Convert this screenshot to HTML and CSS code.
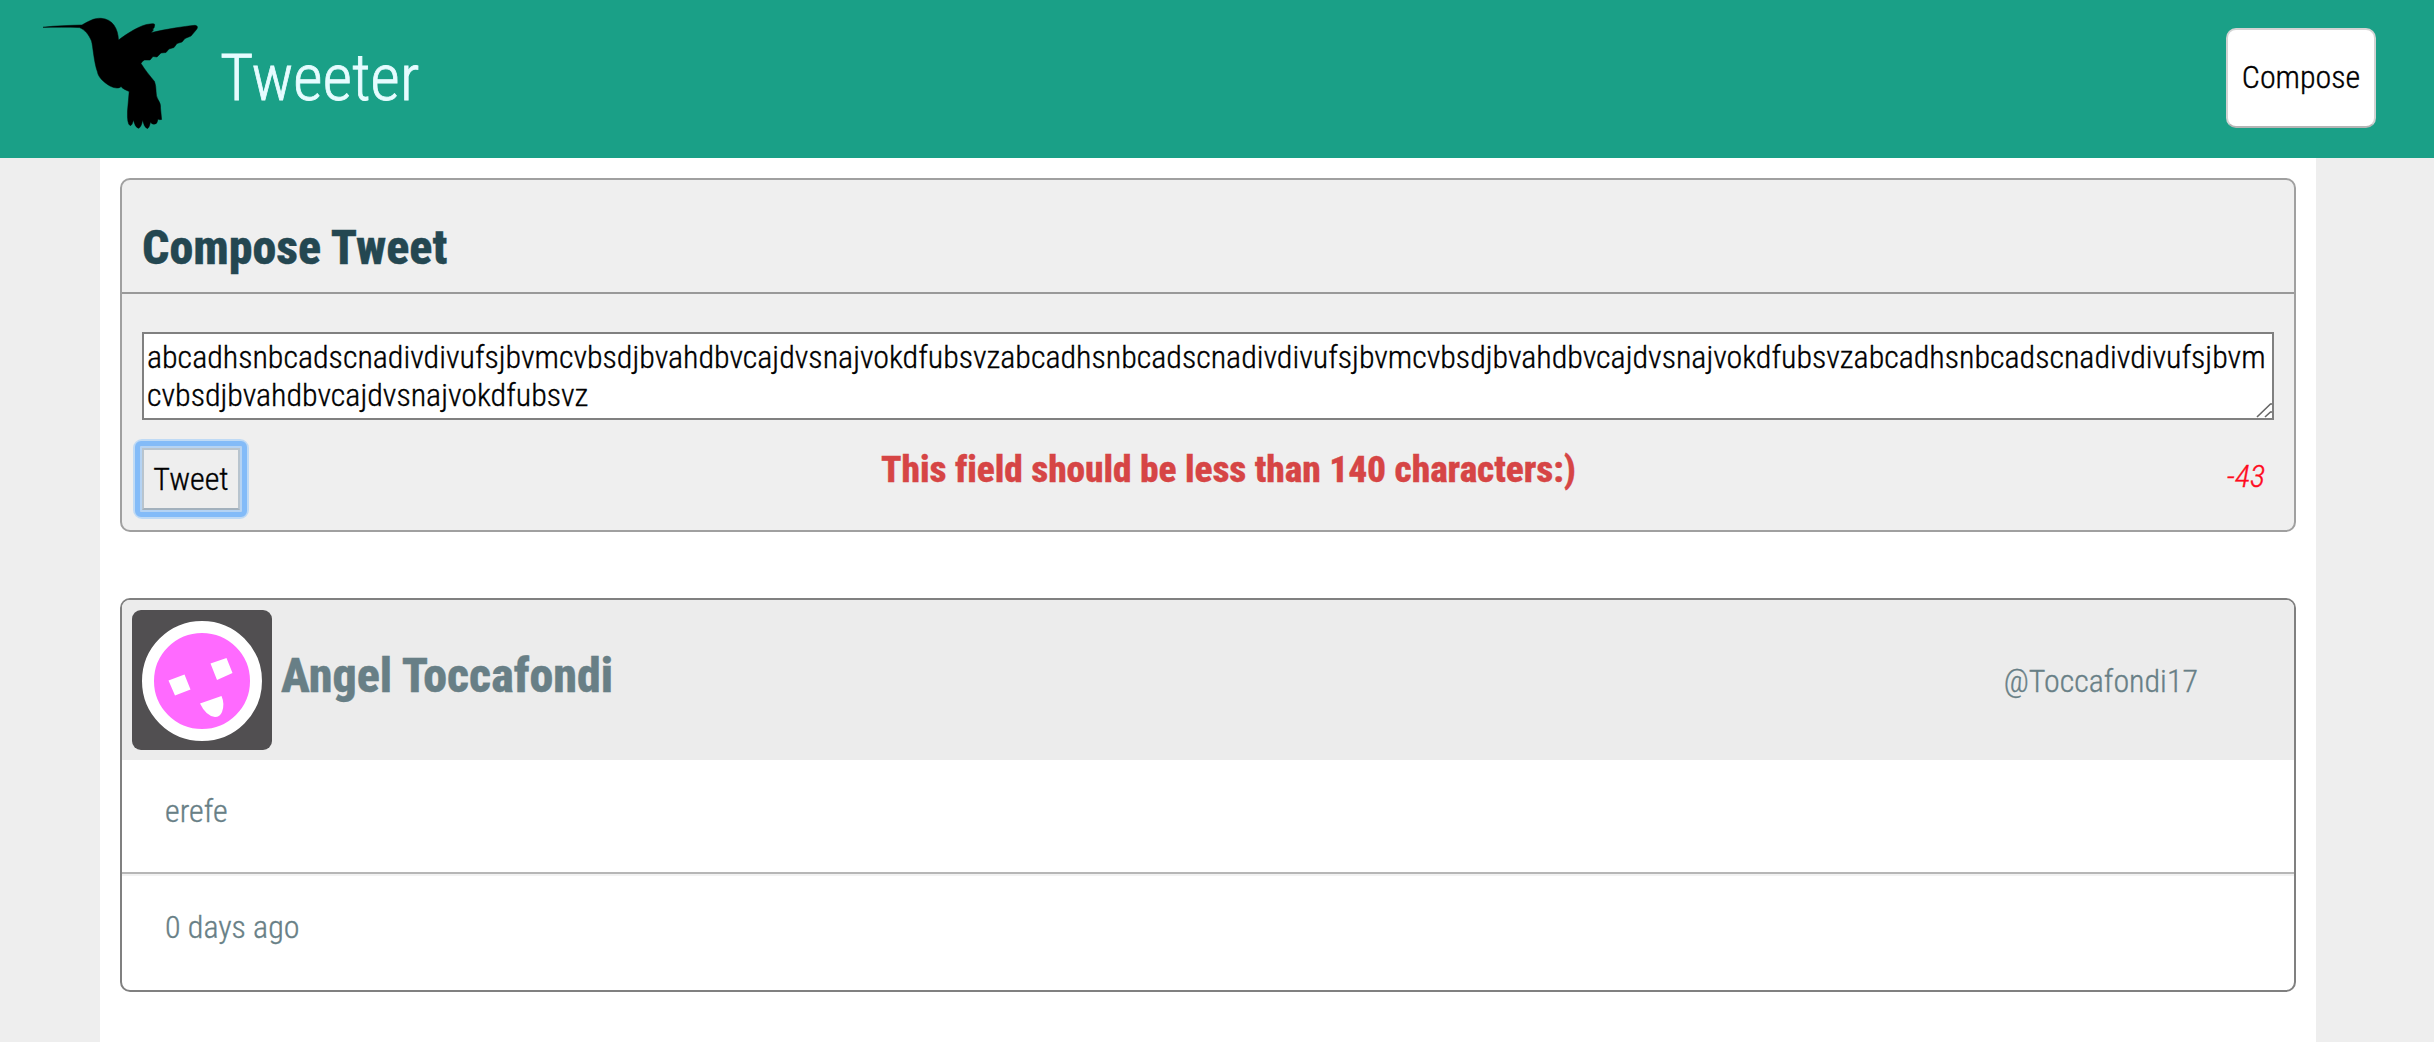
FILE: index.html
```html
<!DOCTYPE html>
<html lang="en">
<head>
<meta charset="utf-8">
<title>Tweeter</title>
<link rel="stylesheet" href="styles.css">
</head>
<body>
<header class="nav">
  <svg class="logo" viewBox="0 0 180 125" width="180" height="125" aria-hidden="true">
    <path stroke="#000" stroke-width="0.5" d="M13 17.3C26 15.6 40 15.4 52 15C59 11 64 8 71 8.3C83 9 88 19 88.500 30C98 23 111 14.500 120 14Q125 13 124.700 15L124 18L122.500 19L123.500 20L121 22.700C137 19 153 16.500 165 15.300Q169 16 166.500 19.500L161 26L155 28.500L152 32L147 33.500L144 37.500L139 39L136 42.500L131 43L127 47L123 46.500L120 50L114.500 50Q112 51 111 53.500C115 60 120 66 124.500 71.500C127 78 125 85 128 89.500Q131 94 130.500 98L131.600 109.500Q129 110 128 109Q127 114.500 125 114Q122 115 120.500 112Q119 119 117 118.500Q114 117 112.700 110Q111 118.500 108 118.300Q105 117 103.500 110Q102 116 100 115.500Q97 114 97.500 101L99.200 81.500C96 80 93 79 91 76.500C89 79 84 78 80 76C73 72 68 66.500 67.500 62C64 53 63 36 61.500 31C58.500 24 55 20 49.500 17.600C38 16.800 25 17.400 13 17.300Z"/>
  </svg>
  <span class="brand">Tweeter</span>
  <button class="compose-toggle">Compose</button>
</header>
<main class="container">
  <section class="new-tweet">
    <h2 class="section-title">Compose Tweet</h2>
    <form class="tweet-form">
      <div class="input-wrap">
        <textarea class="tweet-input" spellcheck="false">abcadhsnbcadscnadivdivufsjbvmcvbsdjbvahdbvcajdvsnajvokdfubsvzabcadhsnbcadscnadivdivufsjbvmcvbsdjbvahdbvcajdvsnajvokdfubsvzabcadhsnbcadscnadivdivufsjbvmcvbsdjbvahdbvcajdvsnajvokdfubsvz</textarea>
        <svg class="grip" viewBox="0 0 16 16" width="16" height="16" aria-hidden="true">
          <path d="M1 15L14.500 2H16M9 15L14.500 10H16" fill="none" stroke="#666" stroke-width="1.6"/>
        </svg>
      </div>
      <div class="form-row">
        <button class="submit" type="button">Tweet</button>
        <h3 class="error">This field should be less than 140 characters:)</h3>
        <span class="counter">-43</span>
      </div>
    </form>
  </section>
  <article class="tweet">
    <header class="tweet-header">
      <svg class="avatar" viewBox="0 0 140 140" width="140" height="140" aria-hidden="true">
        <rect width="140" height="140" fill="#514f51"/>
        <circle cx="70" cy="71" r="54" fill="#ff6aff" stroke="#fff" stroke-width="12"/>
        <path d="M36.500 70.500L52.500 64.500L58.500 79.500L43 85.500ZM78.500 53.500L94.500 48L100.500 63L85 70ZM68 93.500L89.500 86Q93 94 90 102Q88 107 83 107Q74 106 68 93.500Z" fill="#fff"/>
      </svg>
      <h2 class="author">Angel Toccafondi</h2>
      <span class="handle">@Toccafondi17</span>
    </header>
    <p class="tweet-body">erefe</p>
    <footer class="tweet-footer">0 days ago</footer>
  </article>
</main>
</body>
</html>
```
FILE: styles.css
```css
* { box-sizing: border-box; }

body {
  margin: 0;
  min-height: 1042px;
  background: #eee;
  color: #000;
  font-family: "Roboto Condensed", Roboto, sans-serif;
  font-stretch: 75%;
  font-weight: 300;
  font-size: 32px;
  line-height: 38px;
  -webkit-text-stroke: 0.35px currentColor;
}

button, textarea { font: inherit; font-stretch: inherit; color: inherit; }

.nav {
  display: flex;
  align-items: center;
  height: 158px;
  padding: 0 58px 2px 30px;
  background: #1aa087;
}

.logo { margin-bottom: 11px; }

.brand {
  margin: 1px 0 0 10px;
  color: #e6fcff;
  font-size: 64px;
  line-height: 76px;
  -webkit-text-stroke: 0.8px #e6fcff;
}

.compose-toggle {
  width: 150px;
  height: 100px;
  margin-left: auto;
  padding: 0 0 2px;
  border: 2px solid #d3d3d3;
  border-bottom-color: #b5b5b5;
  border-radius: 10px;
  background: #fff;
}

.container {
  width: 2216px;
  min-height: 884px;
  margin-left: 100px;
  padding: 20px;
  background: #fff;
}

.new-tweet {
  height: 354px;
  border: 2px solid #a0a0a0;
  border-radius: 10px;
  background: #efefef;
}

.section-title {
  height: 114px;
  margin: 0;
  padding: 40px 20px 0;
  border-bottom: 2px solid #999;
  color: #244751;
  font-size: 48px;
  font-weight: 760;
  line-height: 56px;
}

.tweet-form { padding: 38px 20px 0; }

.input-wrap { position: relative; }

.tweet-input {
  display: block;
  width: 2132px;
  height: 88px;
  padding: 4px 0 4px 3px;
  border: 2px solid #808080;
  border-radius: 0;
  background: #fff;
  overflow: hidden;
  word-break: break-all;
  letter-spacing: -0.01px;
  outline: none;
  resize: none;
}

.grip {
  position: absolute;
  right: 2px;
  bottom: 2px;
}

.form-row {
  display: flex;
  justify-content: space-between;
  padding: 28px 9px 0 0;
}

.submit {
  position: relative;
  width: 98px;
  height: 62px;
  padding: 0;
  border: 2px solid #b8c4ce;
  border-bottom-color: #a3b1bd;
  border-radius: 0;
  background: #eee;
  box-shadow: 0 0 0 2px #b5d3f3;
}

/* Focus ring: soft outer edge with a solid band inside it */
.submit::before,
.submit::after {
  content: "";
  position: absolute;
}

.submit::before {
  inset: -11px;
  border: 3px solid #bfdaf5;
  border-radius: 9px;
}

.submit::after {
  inset: -9px;
  border: 5px solid #83bbf8;
  border-radius: 6px;
}

.error {
  position: relative;
  left: -5px;
  margin: 0;
  color: #d64545;
  font-size: 37.44px;
  font-weight: 760;
  line-height: 42px;
  letter-spacing: -0.07px;
}

.counter { margin-top: 9px; color: #ff0a1e; font-style: italic; }

.tweet {
  height: 394px;
  margin-top: 66px;
  border: 2px solid #808080;
  border-radius: 10px;
  color: #687f86;
  overflow: hidden;
}

.tweet-header {
  display: flex;
  height: 160px;
  padding: 10px 96px 0 10px;
  background: #ececec;
}

.avatar { border-radius: 9px; }

.author {
  margin: 38px 0 0 9px;
  font-size: 48px;
  font-weight: 760;
  line-height: 56px;
}

.handle { margin: 52px 0 0 auto; }

.tweet-body {
  height: 114px;
  margin: 0;
  padding: 32px 43px 0;
  border-bottom: 2px solid #b6b6b6;
}

.tweet-footer {
  height: 116px;
  padding: 32px 43px 0;
  border-top: 2px solid #f2f2f2;
}
```
